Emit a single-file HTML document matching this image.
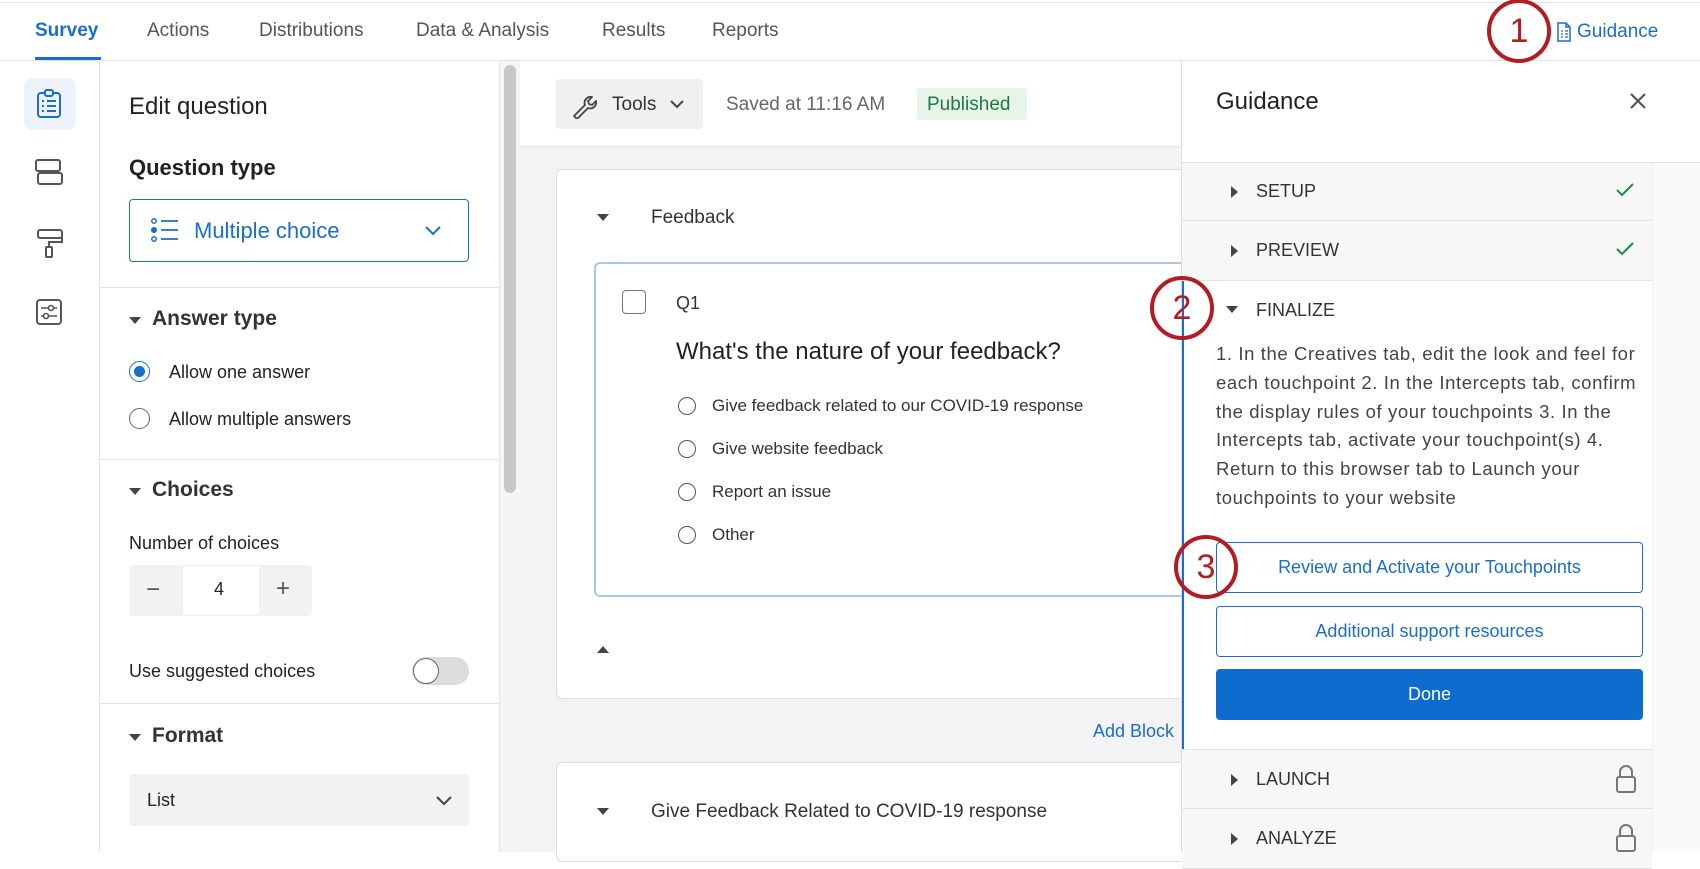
<!DOCTYPE html>
<html><head><meta charset="utf-8"><style>
*{box-sizing:border-box;margin:0;padding:0}
body{width:1700px;height:852px;overflow:hidden;position:relative;background:#fff;font-family:"Liberation Sans",Arial,sans-serif;color:#222}
.a{position:absolute;white-space:nowrap}
.nav{font-size:19px;color:#555;top:20px}
.hr{position:absolute;height:1px;background:#e4e4e4}
.rad{position:absolute;width:18px;height:18px;border:1.5px solid #555;border-radius:50%}
.sec{font-size:21px;font-weight:bold;color:#333}
.tri{position:absolute;width:0;height:0;border-left:6px solid transparent;border-right:6px solid transparent;border-top:7px solid #444}
.trir{position:absolute;width:0;height:0;border-top:6px solid transparent;border-bottom:6px solid transparent;border-left:7px solid #444}
.row{position:absolute;left:1182px;width:470px;background:#f7f7f7;border-bottom:1px solid #e2e2e2}
.row span{position:absolute;left:74px;font-size:18px;color:#333}
.btn{position:absolute;left:1216px;width:427px;height:51px;border:1.5px solid #1a6ec9;border-radius:4px;color:#1a6ec9;font-size:18px;text-align:center;line-height:48px}
.circ{position:absolute;width:64px;height:64px;border:4px solid #b41c24;border-radius:50%;color:#b41c24;font-size:34px;text-align:center;line-height:56px;background:transparent}
.ch{font-size:17px;color:#333}
</style></head><body>
<div class="hr" style="top:2px;left:0;width:1700px"></div>
<div class="a nav" style="left:35px;color:#1a6ec9;font-weight:bold">Survey</div>
<div style="position:absolute;left:35px;top:57px;width:66px;height:4px;background:#1a6ec9"></div>
<div class="a nav" style="left:147px">Actions</div>
<div class="a nav" style="left:259px">Distributions</div>
<div class="a nav" style="left:416px">Data &amp; Analysis</div>
<div class="a nav" style="left:602px">Results</div>
<div class="a nav" style="left:712px">Reports</div>
<svg class="a" style="left:1556px;top:22px" width="16" height="20" viewBox="0 0 16 20"><path d="M2 1h8l4 4v14H2z M10 1v4h4" fill="none" stroke="#1a6ec9" stroke-width="1.5"/><path d="M5 9h2M9 9h3M5 12h2M9 12h3M5 15h2M9 15h3" stroke="#1a6ec9" stroke-width="1.3"/></svg>
<div class="a" style="left:1577px;top:21px;font-size:19px;color:#1a6ec9">Guidance</div>
<div class="hr" style="top:60px;left:0;width:1700px"></div>

<!-- left rail -->
<div style="position:absolute;left:99px;top:61px;width:1px;height:791px;background:#e4e4e4"></div>
<div style="position:absolute;left:24px;top:78px;width:52px;height:52px;border-radius:8px;background:#eef3fb"></div>
<svg class="a" style="left:36px;top:89px" width="26" height="30" viewBox="0 0 26 30"><rect x="2" y="4" width="22" height="24" rx="3" fill="none" stroke="#1a6ec9" stroke-width="2"/><rect x="9" y="1" width="8" height="6" rx="2" fill="#eef3fb" stroke="#1a6ec9" stroke-width="2"/><path d="M6 12h2M11 12h9M6 17h2M11 17h9M6 22h2M11 22h9" stroke="#1a6ec9" stroke-width="2"/></svg>
<svg class="a" style="left:34px;top:158px" width="30" height="30" viewBox="0 0 30 30"><rect x="2" y="2" width="24" height="11" rx="2" fill="none" stroke="#555" stroke-width="2"/><rect x="4" y="15" width="24" height="11" rx="2" fill="none" stroke="#555" stroke-width="2"/></svg>
<svg class="a" style="left:36px;top:228px" width="28" height="30" viewBox="0 0 28 30"><rect x="2" y="2" width="24" height="8" rx="2" fill="none" stroke="#555" stroke-width="2"/><path d="M26 6h0v8H13v5" fill="none" stroke="#555" stroke-width="2"/><rect x="10" y="19" width="6" height="10" rx="1" fill="none" stroke="#555" stroke-width="2"/></svg>
<svg class="a" style="left:36px;top:299px" width="26" height="26" viewBox="0 0 26 26"><rect x="1" y="1" width="24" height="24" rx="3" fill="none" stroke="#555" stroke-width="2"/><path d="M5 9h16M5 17h16" stroke="#555" stroke-width="1.6"/><circle cx="15" cy="9" r="2.5" fill="#fff" stroke="#555" stroke-width="1.6"/><circle cx="10" cy="17" r="2.5" fill="#fff" stroke="#555" stroke-width="1.6"/></svg>

<!-- edit panel -->
<div style="position:absolute;left:499px;top:61px;width:1px;height:791px;background:#e4e4e4"></div>
<div style="position:absolute;left:500px;top:61px;width:20px;height:791px;background:#f5f5f5"></div>
<div style="position:absolute;left:504px;top:65px;width:12px;height:428px;border-radius:6px;background:#c8c8c8"></div>
<div class="a" style="left:129px;top:93px;font-size:24px;color:#222">Edit question</div>
<div class="a" style="left:129px;top:155px;font-size:22px;font-weight:bold;color:#222">Question type</div>
<div style="position:absolute;left:129px;top:199px;width:340px;height:63px;border:1.5px solid #1a6ec9;border-radius:4px"></div>
<svg class="a" style="left:151px;top:218px" width="28" height="26" viewBox="0 0 28 26"><circle cx="3" cy="3" r="2.2" fill="none" stroke="#1a6ec9" stroke-width="1.5"/><circle cx="3" cy="12" r="3" fill="#1a6ec9"/><circle cx="3" cy="21" r="2.2" fill="none" stroke="#1a6ec9" stroke-width="1.5"/><path d="M10 3h17M10 12h17M10 21h17" stroke="#1a6ec9" stroke-width="1.8"/></svg>
<div class="a" style="left:194px;top:218px;font-size:22px;color:#1a6ec9">Multiple choice</div>
<svg class="a" style="left:425px;top:226px" width="16" height="10" viewBox="0 0 16 10"><path d="M1 1l7 7 7-7" fill="none" stroke="#1a6ec9" stroke-width="2"/></svg>
<div class="hr" style="top:287px;left:100px;width:399px"></div>
<div class="tri" style="left:129px;top:317px"></div>
<div class="a sec" style="left:152px;top:307px">Answer type</div>
<div style="position:absolute;left:129px;top:361px;width:21px;height:21px;border:1.5px solid #1a6ec9;border-radius:50%"></div>
<div style="position:absolute;left:134px;top:366px;width:11px;height:11px;background:#1a6ec9;border-radius:50%"></div>
<div class="a" style="left:169px;top:362px;font-size:18px">Allow one answer</div>
<div style="position:absolute;left:129px;top:408px;width:21px;height:21px;border:1.5px solid #666;border-radius:50%"></div>
<div class="a" style="left:169px;top:409px;font-size:18px">Allow multiple answers</div>
<div class="hr" style="top:459px;left:100px;width:399px"></div>
<div class="tri" style="left:129px;top:488px"></div>
<div class="a sec" style="left:152px;top:478px">Choices</div>
<div class="a" style="left:129px;top:533px;font-size:18px">Number of choices</div>
<div style="position:absolute;left:129px;top:565px;width:183px;height:51px;background:#f2f2f2;border-radius:4px"></div>
<div style="position:absolute;left:182px;top:565px;width:78px;height:51px;background:#fff;border:1px solid #eee"></div>
<div class="a" style="left:146px;top:576px;font-size:24px;color:#555">−</div>
<div class="a" style="left:214px;top:579px;font-size:18px">4</div>
<div class="a" style="left:276px;top:575px;font-size:24px;color:#555">+</div>
<div class="a" style="left:129px;top:661px;font-size:18px">Use suggested choices</div>
<div style="position:absolute;left:412px;top:657px;width:57px;height:28px;border-radius:14px;background:#dcdcdc"></div>
<div style="position:absolute;left:413px;top:658px;width:26px;height:26px;border-radius:50%;background:#fff;border:1.5px solid #666"></div>
<div class="hr" style="top:703px;left:100px;width:399px"></div>
<div class="tri" style="left:129px;top:734px"></div>
<div class="a sec" style="left:152px;top:724px">Format</div>
<div style="position:absolute;left:129px;top:774px;width:340px;height:52px;background:#f2f2f2;border-radius:4px"></div>
<div class="a" style="left:147px;top:790px;font-size:18px">List</div>
<svg class="a" style="left:436px;top:796px" width="16" height="10" viewBox="0 0 16 10"><path d="M1 1l7 7 7-7" fill="none" stroke="#444" stroke-width="2"/></svg>

<!-- middle -->
<div style="position:absolute;left:520px;top:146px;width:662px;height:706px;background:#f3f3f3"></div>
<div class="hr" style="top:146px;left:520px;width:662px"></div>
<div style="position:absolute;left:556px;top:79px;width:147px;height:50px;background:#f0f0f0;border-radius:4px"></div>
<svg class="a" style="left:571px;top:91px" width="28" height="28" viewBox="0 0 28 28"><path d="M3 25l11-11a6 6 0 0 1 7-8l-4 4 1 3 3 1 4-4a6 6 0 0 1-8 7L6 28z" fill="none" stroke="#444" stroke-width="1.8" stroke-linejoin="round"/></svg>
<div class="a" style="left:612px;top:94px;font-size:19px;color:#333">Tools</div>
<svg class="a" style="left:670px;top:100px" width="14" height="9" viewBox="0 0 14 9"><path d="M1 1l6 6 6-6" fill="none" stroke="#444" stroke-width="2"/></svg>
<div class="a" style="left:726px;top:94px;font-size:19px;color:#666">Saved at 11:16 AM</div>
<div style="position:absolute;left:917px;top:88px;width:110px;height:32px;background:#e7f4ea;border-radius:3px"></div>
<div class="a" style="left:927px;top:94px;font-size:19px;color:#1f7a3a">Published</div>

<div style="position:absolute;left:556px;top:169px;width:640px;height:530px;background:#fff;border:1px solid #ddd;border-radius:6px"></div>
<div class="tri" style="left:597px;top:214px"></div>
<div class="a" style="left:651px;top:207px;font-size:19px;color:#333">Feedback</div>
<div style="position:absolute;left:594px;top:262px;width:600px;height:335px;border:2px solid #a8c6ea;border-radius:6px;background:#fff"></div>
<div style="position:absolute;left:622px;top:290px;width:24px;height:24px;border:1.5px solid #777;border-radius:4px"></div>
<div class="a" style="left:676px;top:293px;font-size:18px;color:#333">Q1</div>
<div class="a" style="left:676px;top:338px;font-size:24px;color:#222">What's the nature of your feedback?</div>
<div class="rad" style="left:678px;top:397px"></div><div class="a ch" style="left:712px;top:396px">Give feedback related to our COVID-19 response</div>
<div class="rad" style="left:678px;top:440px"></div><div class="a ch" style="left:712px;top:439px">Give website feedback</div>
<div class="rad" style="left:678px;top:483px"></div><div class="a ch" style="left:712px;top:482px">Report an issue</div>
<div class="rad" style="left:678px;top:526px"></div><div class="a ch" style="left:712px;top:525px">Other</div>
<div style="position:absolute;left:597px;top:646px;width:0;height:0;border-left:6px solid transparent;border-right:6px solid transparent;border-bottom:7px solid #444"></div>
<div class="a" style="left:1093px;top:721px;font-size:18px;color:#1a6ec9">Add Block</div>
<div style="position:absolute;left:556px;top:762px;width:640px;height:100px;background:#fff;border:1px solid #ddd;border-radius:6px"></div>
<div class="tri" style="left:597px;top:808px"></div>
<div class="a" style="left:651px;top:801px;font-size:19px;color:#333">Give Feedback Related to COVID-19 response</div>

<!-- guidance panel -->
<div style="position:absolute;left:1181px;top:61px;width:519px;height:791px;background:#fff;border-left:1px solid #ddd"></div>
<div class="a" style="left:1216px;top:88px;font-size:24px;color:#222">Guidance</div>
<svg class="a" style="left:1629px;top:92px" width="18" height="18" viewBox="0 0 18 18"><path d="M2 2l14 14M16 2L2 16" stroke="#555" stroke-width="2.2"/></svg>
<div class="hr" style="top:162px;left:1182px;width:518px;background:#ddd"></div>
<div style="position:absolute;left:1652px;top:163px;width:48px;height:689px;background:#fafafa;border-left:1px solid #eee"></div>
<div class="row" style="top:163px;height:58px"><div class="trir" style="left:49px;top:23px"></div><span style="top:18px">SETUP</span></div>
<svg class="a" style="left:1616px;top:183px" width="18" height="14" viewBox="0 0 18 14"><path d="M1 7l5 5L17 1" fill="none" stroke="#1f8a4a" stroke-width="2"/></svg>
<div class="row" style="top:221px;height:60px"><div class="trir" style="left:49px;top:24px"></div><span style="top:19px">PREVIEW</span></div>
<svg class="a" style="left:1616px;top:242px" width="18" height="14" viewBox="0 0 18 14"><path d="M1 7l5 5L17 1" fill="none" stroke="#1f8a4a" stroke-width="2"/></svg>
<div style="position:absolute;left:1182px;top:281px;width:2px;height:468px;background:#1a6ec9"></div>
<div class="tri" style="left:1226px;top:306px"></div>
<div class="a" style="left:1256px;top:300px;font-size:18px;color:#333">FINALIZE</div>
<div class="a" style="left:1216px;top:340px;font-size:18.5px;letter-spacing:0.6px;line-height:28.8px;color:#444;white-space:normal;width:442px">1. In the Creatives tab, edit the look and feel for each touchpoint 2. In the Intercepts tab, confirm the display rules of your touchpoints 3. In the Intercepts tab, activate your touchpoint(s) 4. Return to this browser tab to Launch your touchpoints to your website</div>
<div class="btn" style="top:542px">Review and Activate your Touchpoints</div>
<div class="btn" style="top:606px">Additional support resources</div>
<div class="btn" style="top:669px;background:#0f6ccf;color:#fff;border-color:#0f6ccf">Done</div>
<div class="row" style="top:749px;height:60px;border-top:1px solid #e2e2e2"><div class="trir" style="left:49px;top:24px"></div><span style="top:19px">LAUNCH</span></div>
<div class="row" style="top:809px;height:60px"><div class="trir" style="left:49px;top:24px"></div><span style="top:19px">ANALYZE</span></div>
<svg class="a" style="left:1615px;top:764px" width="22" height="30" viewBox="0 0 22 30"><path d="M5 13V8a6 6 0 0 1 12 0v5" fill="none" stroke="#777" stroke-width="2"/><rect x="2" y="13" width="18" height="15" rx="2" fill="none" stroke="#777" stroke-width="2"/></svg>
<svg class="a" style="left:1615px;top:823px" width="22" height="30" viewBox="0 0 22 30"><path d="M5 13V8a6 6 0 0 1 12 0v5" fill="none" stroke="#777" stroke-width="2"/><rect x="2" y="13" width="18" height="15" rx="2" fill="none" stroke="#777" stroke-width="2"/></svg>

<!-- callouts -->
<div class="circ" style="left:1487px;top:-1px">1</div>
<div class="circ" style="left:1150px;top:276px">2</div>
<div class="circ" style="left:1174px;top:535px">3</div>
</body></html>
